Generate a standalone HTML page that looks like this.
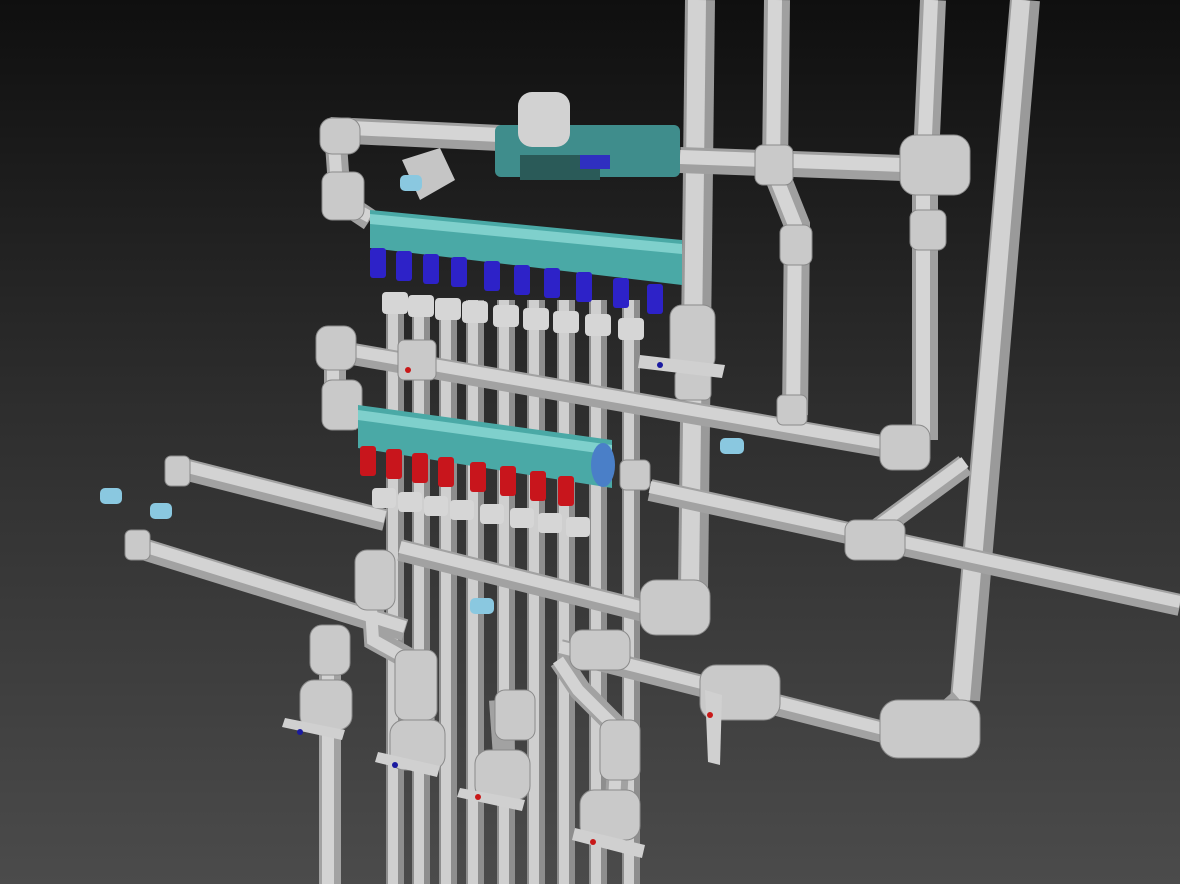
<!DOCTYPE html>
<html><head><meta charset="utf-8"><style>
html,body{margin:0;padding:0;width:1180px;height:884px;overflow:hidden;background:linear-gradient(#0f0f0f,#2c2c2c 45%,#4a4a4a);}
svg{display:block}
</style></head><body>
<svg width="1180" height="884" viewBox="0 0 1180 884">
<defs>
<linearGradient id="bg" x1="0" y1="0" x2="0" y2="1"><stop offset="0" stop-color="#0f0f0f"/><stop offset="0.45" stop-color="#2d2d2d"/><stop offset="1" stop-color="#4b4b4b"/></linearGradient>
</defs>
<rect width="1180" height="884" fill="url(#bg)"/>
<g stroke-linecap="butt" fill="none">
<!-- bundle verticals (back) -->
<g stroke="#8e8e8e" stroke-width="18">
<line x1="395" y1="300" x2="395" y2="884"/><line x1="421" y1="300" x2="421" y2="884"/><line x1="448" y1="300" x2="448" y2="884"/><line x1="475" y1="300" x2="475" y2="884"/><line x1="506" y1="300" x2="506" y2="884"/><line x1="536" y1="300" x2="536" y2="884"/><line x1="566" y1="300" x2="566" y2="884"/><line x1="598" y1="300" x2="598" y2="884"/><line x1="631" y1="300" x2="631" y2="884"/>
</g>
<g stroke="#cfcfcf" stroke-width="10">
<line x1="393" y1="300" x2="393" y2="884"/><line x1="419" y1="300" x2="419" y2="884"/><line x1="446" y1="300" x2="446" y2="884"/><line x1="473" y1="300" x2="473" y2="884"/><line x1="504" y1="300" x2="504" y2="884"/><line x1="534" y1="300" x2="534" y2="884"/><line x1="564" y1="300" x2="564" y2="884"/><line x1="596" y1="300" x2="596" y2="884"/><line x1="629" y1="300" x2="629" y2="884"/>
</g>
<!-- big pipes -->
<g stroke="#9a9a9a" stroke-width="30">
<line x1="1025" y1="0" x2="965" y2="700"/>
<line x1="700" y1="0" x2="693" y2="590"/>
</g>
<g stroke="#d2d2d2" stroke-width="18">
<line x1="1021" y1="0" x2="961" y2="700"/>
<line x1="697" y1="0" x2="690" y2="590"/>
</g>
<g stroke="#a0a0a0" stroke-width="26">
<polyline points="777,0 775,170 797,225 795,415"/>
<polyline points="933,0 925,180 925,440"/>
<line x1="330" y1="130" x2="500" y2="138"/>
<line x1="680" y1="160" x2="960" y2="170"/>
</g>
<g stroke="#d5d5d5" stroke-width="14">
<polyline points="775,0 773,170 795,225 793,415"/>
<polyline points="931,0 923,180 923,440"/>
<line x1="330" y1="127" x2="500" y2="135"/>
<line x1="680" y1="157" x2="960" y2="167"/>
</g>
<!-- diagonal pipes -->
<g stroke="#a2a2a2" stroke-width="22">
<line x1="330" y1="350" x2="905" y2="450"/>
<line x1="650" y1="490" x2="1180" y2="605"/>
<line x1="870" y1="535" x2="965" y2="465"/>
<line x1="180" y1="468" x2="385" y2="520"/>
<line x1="140" y1="548" x2="405" y2="630"/>
<line x1="400" y1="550" x2="660" y2="615"/>
<line x1="560" y1="650" x2="915" y2="740"/>
<polyline points="335,345 335,410 360,420"/>
<polyline points="335,130 340,200 370,220"/>
<polyline points="330,640 330,700 330,884"/>
<polyline points="370,560 375,640 420,665 425,740"/>
<polyline points="500,700 505,770"/>
<polyline points="560,660 580,690 620,730 615,820"/>
<polyline points="915,740 960,700"/>
<polyline points="660,615 690,590"/>
</g>
<g stroke="#d3d3d3" stroke-width="12">
<line x1="330" y1="347" x2="905" y2="447"/>
<line x1="650" y1="487" x2="1180" y2="602"/>
<line x1="870" y1="532" x2="965" y2="462"/>
<line x1="180" y1="465" x2="385" y2="517"/>
<line x1="140" y1="545" x2="405" y2="627"/>
<line x1="400" y1="547" x2="660" y2="612"/>
<line x1="560" y1="647" x2="915" y2="737"/>
<polyline points="333,345 333,410 360,417"/>
<polyline points="333,130 338,200 370,217"/>
<polyline points="328,640 328,884"/>
<polyline points="368,560 373,640 418,665 423,740"/>
<polyline points="558,660 578,690 618,730 613,820"/>
</g>
</g>
<!-- fittings -->
<g fill="#c9c9c9" stroke="#8a8a8a" stroke-width="1">
<rect x="320" y="118" width="40" height="36" rx="12"/>
<rect x="322" y="172" width="42" height="48" rx="10"/>
<rect x="316" y="326" width="40" height="44" rx="12"/>
<rect x="322" y="380" width="40" height="50" rx="10"/>
<rect x="755" y="145" width="38" height="40" rx="8"/>
<rect x="900" y="135" width="70" height="60" rx="16"/>
<rect x="910" y="210" width="36" height="40" rx="8"/>
<rect x="780" y="225" width="32" height="40" rx="8"/>
<rect x="777" y="395" width="30" height="30" rx="6"/>
<rect x="880" y="425" width="50" height="45" rx="12"/>
<rect x="845" y="520" width="60" height="40" rx="10"/>
<rect x="670" y="305" width="45" height="65" rx="12"/>
<rect x="675" y="370" width="36" height="30" rx="6"/>
<rect x="620" y="460" width="30" height="30" rx="6"/>
<rect x="640" y="580" width="70" height="55" rx="16"/>
<rect x="880" y="700" width="100" height="58" rx="18"/>
<rect x="700" y="665" width="80" height="55" rx="16"/>
<rect x="570" y="630" width="60" height="40" rx="12"/>
<rect x="300" y="680" width="52" height="50" rx="14"/>
<rect x="390" y="720" width="55" height="50" rx="14"/>
<rect x="475" y="750" width="55" height="50" rx="14"/>
<rect x="580" y="790" width="60" height="50" rx="14"/>
<rect x="395" y="650" width="42" height="70" rx="10"/>
<rect x="495" y="690" width="40" height="50" rx="10"/>
<rect x="600" y="720" width="40" height="60" rx="10"/>
<rect x="355" y="550" width="40" height="60" rx="12"/>
<rect x="310" y="625" width="40" height="50" rx="12"/>
<rect x="165" y="456" width="25" height="30" rx="6"/>
<rect x="125" y="530" width="25" height="30" rx="6"/>
<rect x="398" y="340" width="38" height="40" rx="6"/>
</g>
<!-- valve handles -->
<g fill="#d0d0d0">
<polygon points="285,718 345,730 342,740 282,727"/>
<polygon points="378,752 440,766 437,777 375,762"/>
<polygon points="460,788 525,800 522,811 457,797"/>
<polygon points="575,828 645,845 642,858 572,840"/>
<polygon points="640,355 725,365 722,378 638,368"/>
<polygon points="705,690 722,695 720,765 708,762"/>
</g>
<g fill="#1a1aa0"><circle cx="300" cy="732" r="3"/><circle cx="395" cy="765" r="3"/><circle cx="660" cy="365" r="3"/></g>
<g fill="#c81818"><circle cx="478" cy="797" r="3"/><circle cx="593" cy="842" r="3"/><circle cx="710" cy="715" r="3"/><circle cx="408" cy="370" r="3"/></g>
<!-- top valve assembly -->
<rect x="495" y="125" width="185" height="52" rx="6" fill="#3f8d8c"/>
<rect x="518" y="92" width="52" height="55" rx="14" fill="#d2d2d2"/>
<rect x="520" y="155" width="80" height="25" fill="#2a5a58"/>
<polygon points="402,160 440,148 455,180 420,200" fill="#c5c5c5"/>
<rect x="580" y="155" width="30" height="14" fill="#2f2fc0"/>
<!-- manifold 1 -->
<polygon points="370,210 682,240 682,285 370,248" fill="#4aa9a6"/>
<polygon points="370,214 682,244 682,254 370,224" fill="#7fd0cc"/>
<!-- blue valves -->
<g fill="#2d22c8">
<rect x="370" y="248" width="16" height="30" rx="3"/><rect x="396" y="251" width="16" height="30" rx="3"/><rect x="423" y="254" width="16" height="30" rx="3"/><rect x="451" y="257" width="16" height="30" rx="3"/><rect x="484" y="261" width="16" height="30" rx="3"/><rect x="514" y="265" width="16" height="30" rx="3"/><rect x="544" y="268" width="16" height="30" rx="3"/><rect x="576" y="272" width="16" height="30" rx="3"/><rect x="613" y="278" width="16" height="30" rx="3"/><rect x="647" y="284" width="16" height="30" rx="3"/>
</g>
<g fill="#d6d6d6">
<rect x="382" y="292" width="26" height="22" rx="4"/><rect x="408" y="295" width="26" height="22" rx="4"/><rect x="435" y="298" width="26" height="22" rx="4"/><rect x="462" y="301" width="26" height="22" rx="4"/><rect x="493" y="305" width="26" height="22" rx="4"/><rect x="523" y="308" width="26" height="22" rx="4"/><rect x="553" y="311" width="26" height="22" rx="4"/><rect x="585" y="314" width="26" height="22" rx="4"/><rect x="618" y="318" width="26" height="22" rx="4"/>
</g>
<!-- manifold 2 -->
<polygon points="358,405 612,440 612,488 358,448" fill="#4aa9a6"/>
<polygon points="358,410 612,445 612,455 358,420" fill="#7fd0cc"/>
<ellipse cx="603" cy="465" rx="12" ry="22" fill="#4a7fc8"/>
<g fill="#c8151c">
<rect x="360" y="446" width="16" height="30" rx="3"/><rect x="386" y="449" width="16" height="30" rx="3"/><rect x="412" y="453" width="16" height="30" rx="3"/><rect x="438" y="457" width="16" height="30" rx="3"/><rect x="470" y="462" width="16" height="30" rx="3"/><rect x="500" y="466" width="16" height="30" rx="3"/><rect x="530" y="471" width="16" height="30" rx="3"/><rect x="558" y="476" width="16" height="30" rx="3"/>
</g>
<g fill="#d6d6d6">
<rect x="372" y="488" width="24" height="20" rx="4"/><rect x="398" y="492" width="24" height="20" rx="4"/><rect x="424" y="496" width="24" height="20" rx="4"/><rect x="450" y="500" width="24" height="20" rx="4"/><rect x="480" y="504" width="24" height="20" rx="4"/><rect x="510" y="508" width="24" height="20" rx="4"/><rect x="538" y="513" width="24" height="20" rx="4"/><rect x="566" y="517" width="24" height="20" rx="4"/>
</g>
<g fill="#8ac8e0"><rect x="100" y="488" width="22" height="16" rx="5"/><rect x="150" y="503" width="22" height="16" rx="5"/><rect x="470" y="598" width="24" height="16" rx="5"/><rect x="720" y="438" width="24" height="16" rx="5"/><rect x="400" y="175" width="22" height="16" rx="5"/></g>
</svg>
</body></html>
